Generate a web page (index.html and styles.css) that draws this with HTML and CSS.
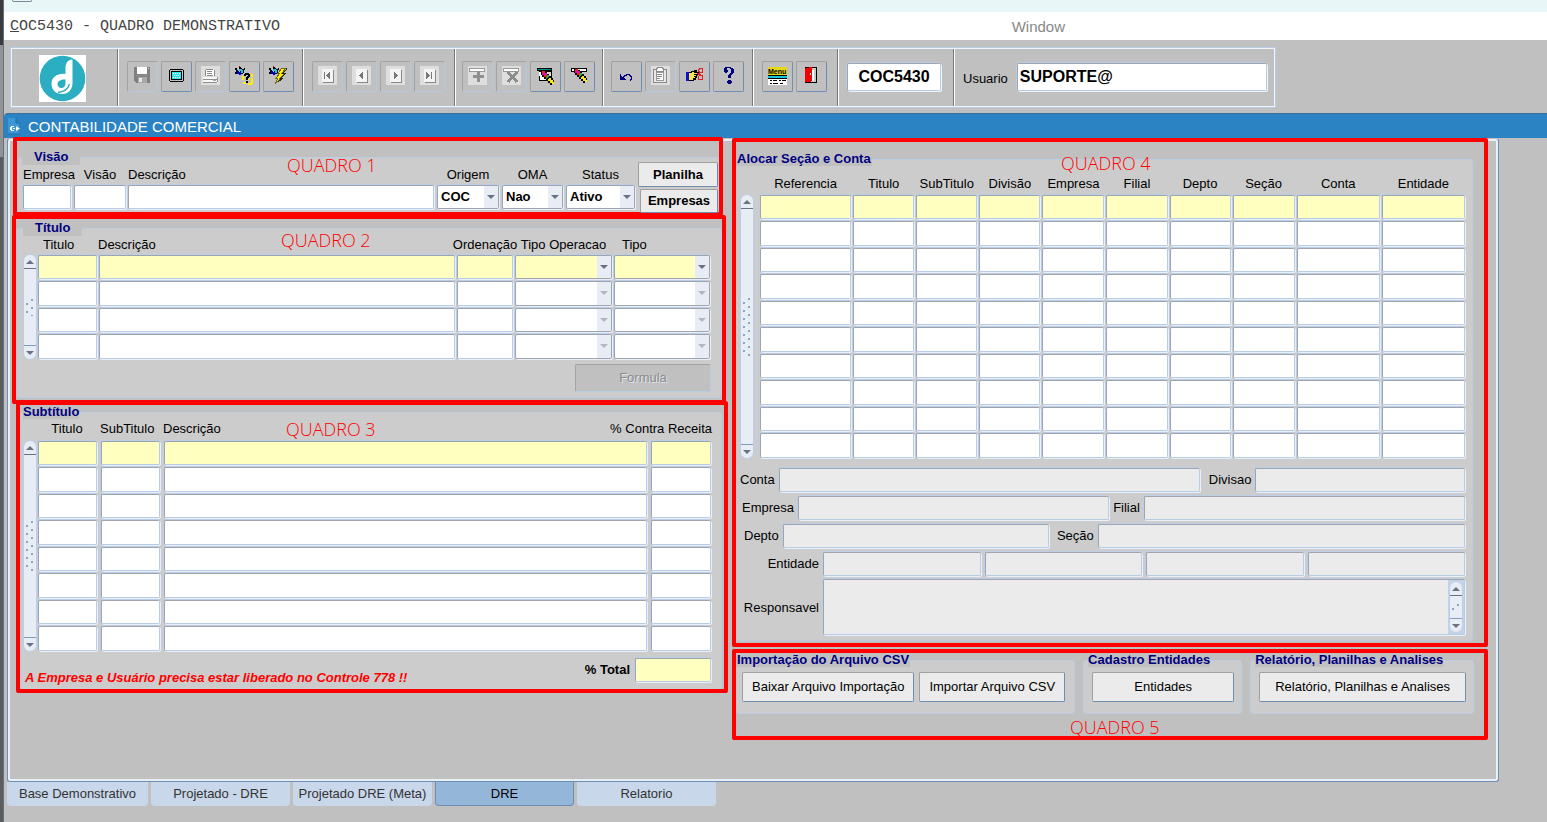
FILE: index.html
```html
<!DOCTYPE html>
<html lang="pt-BR">
<head>
<meta charset="utf-8">
<title>COC5430 - Quadro Demonstrativo</title>
<link rel="stylesheet" href="styles.css">
</head>
<body>
<div class="shell">
  <div class="edge"></div>
  <div class="app">
    <div class="browser-strip"><div class="browser-box"></div></div>
    <nav class="menubar">
      <span class="menu-title"><u>C</u>OC5430 - QUADRO DEMONSTRATIVO</span>
      <span class="menu-window">Window</span>
    </nav>

    <div class="toolbar-area">
      <div class="toolbar">
        <div class="tool-logo">
          <svg width="47" height="47" viewBox="0 0 47 47" aria-label="Logo">
            <rect width="47" height="47" fill="#fff"/>
            <circle cx="23.500" cy="23.500" r="22.800" fill="#2badc2"/>
            <path d="M33 4.500C29 5 26.500 8 26.500 13V19C19 18 12.500 22 12.500 28.500C12.500 35 17 39 23 39C29.500 39 33.500 34.500 33.500 28V5Z" fill="#fff"/>
            <path d="M26.500 24.500V28C26.500 31 24.800 33 22.300 33C20 33 18.500 31.300 18.500 29C18.500 26 22 24.300 26.500 24.500Z" fill="#2badc2"/>
            <path d="M19 37.500C25 37 29 34 30.500 29" stroke="#2badc2" stroke-width="1.300" fill="none"/>
          </svg>
        </div>
        <div class="tool-group">
          <button class="tool" disabled aria-label="Salvar"><svg viewBox="0 0 19 19"><path d="M1 1H17V17H3L1 15Z" fill="#808080"/><path d="M4 1H14V8H4Z" fill="#fff"/><path d="M5 11H14V17H5Z" fill="#a8a8a8"/><path d="M6 12H9V16H6Z" fill="#e8e8e8"/><path d="M15 2H16V3H15Z" fill="#ddd"/><path d="M3 9H15V10H3Z" fill="#909090"/></svg></button>
          <button class="tool" aria-label="Tela"><svg viewBox="0 0 19 19"><path d="M3 3H16V4H17V15H16V16H3V15H2V4H3Z" fill="#000"/><path d="M3 4H16V15H3Z" fill="#c0c0c0"/><path d="M4 5H15V14H4Z" fill="#000"/><path d="M5 6H14V13H5Z" fill="#35e6ee"/><path d="M6 7h1v1h-1zM8 7h1v1h-1zM10 7h1v1h-1zM12 7h1v1h-1zM7 9h1v1h-1zM9 9h1v1h-1zM11 9h1v1h-1zM6 11h1v1h-1zM8 11h1v1h-1zM10 11h1v1h-1zM12 11h1v1h-1z" fill="#d8ffff"/></svg></button>
          <button class="tool" disabled aria-label="Imprimir"><svg viewBox="0 0 19 19"><path d="M0 0H19V19H0Z" fill="#dedede"/><path d="M5 3H13V10H4V5Z" fill="#fff"/><path d="M5 3H12V4H5ZM4 4H5V10H4ZM13 4H14V10H13ZM6 5H11V6H6ZM6 7H11V8H6ZM6 9H12V10H6Z" fill="#888"/><path d="M2 11H16V12H17V17H2Z" fill="#f8f8f8"/><path d="M2 13H16V14H2ZM2 16H16V17H2ZM16 11H17V16H16Z" fill="#909090"/><path d="M12 14H15V15H12Z" fill="#aaa"/></svg></button>
          <button class="tool" aria-label="Entrar consulta"><svg viewBox="0 0 19 19"><path d="M9 8h2v1h-2zM14 7h2v1h-2zM16 8h2v3h-2zM7 10h2v4h-2zM16 12h2v6h-2zM8 16h3v2h-3zM12 13h3v1h-3zM13 17h4v2h-4z" fill="#ffee00"/><use href="#torch"/><path d="M10 7H14V8H15V11H14V12H13V14H11V11H12V10H13V9H11V10H9V8H10ZM11 15H13V17H11Z" fill="#000"/></svg></button>
          <button class="tool" aria-label="Executar consulta"><svg viewBox="0 0 19 19"><use href="#torch"/><path d="M13 2L17 2L13 7H16L11 12H13L6 18L9 12H7L11 7H9Z" fill="#ffee00" stroke="#736c12" stroke-width="1"/><path d="M17 2V4L14 7H17L12 12H14L9 16" fill="none" stroke="#222" stroke-width="1"/></svg></button>
        </div>
        <div class="tool-group group-nav">
          <button class="tool" disabled aria-label="Primeiro"><svg viewBox="0 0 19 19"><use href="#page"/><path d="M6 6H7V13H6ZM8 9H9V8H10V7H11V6H12V13H11V12H10V11H9V10H8Z" fill="#777"/></svg></button>
          <button class="tool" disabled aria-label="Anterior"><svg viewBox="0 0 19 19"><use href="#page"/><path d="M7 9H8V8H9V7H10V6H11V13H10V12H9V11H8V10H7Z" fill="#777"/></svg></button>
          <button class="tool" disabled aria-label="Próximo"><svg viewBox="0 0 19 19"><use href="#page"/><path d="M8 6H9V7H10V8H11V9H12V10H11V11H10V12H9V13H8Z" fill="#777"/></svg></button>
          <button class="tool" disabled aria-label="Último"><svg viewBox="0 0 19 19"><use href="#page"/><path d="M6 6H7V7H8V8H9V9H10V10H9V11H8V12H7V13H6ZM11 6H12V13H11Z" fill="#777"/></svg></button>
        </div>
        <div class="tool-group group-record">
          <button class="tool" disabled aria-label="Inserir registro"><svg viewBox="0 0 19 19"><path d="M0 0H19V19H0Z" fill="#dedede"/><path d="M1 2H17V6H1Z" fill="#999"/><path d="M2 3H16V5H2Z" fill="#fff"/><path d="M9 5H12V9H16V12H12V16H9V12H5V9H9Z" fill="#909090"/></svg></button>
          <button class="tool" disabled aria-label="Remover registro"><svg viewBox="0 0 19 19"><path d="M0 0H19V19H0Z" fill="#dedede"/><path d="M1 2H17V6H1Z" fill="#999"/><path d="M2 3H16V5H2Z" fill="#fff"/><path d="M6 6L15 16M15 6L6 16" stroke="#8c8c8c" stroke-width="3"/></svg></button>
          <button class="tool" aria-label="Limpar bloco"><svg viewBox="0 0 19 19"><path d="M1 2H16V15H3V5H1Z" fill="#000"/><path d="M2 3H15V4H2Z" fill="#0b8a8a"/><path d="M4 6H15V14H4Z" fill="#d8d8d8"/><path d="M3 6L7 6L9 14H4Z" fill="#fff"/><use href="#pencil" x="0" y="1"/></svg></button>
          <button class="tool" aria-label="Limpar registro"><svg viewBox="0 0 19 19"><path d="M1 2H17V6H1Z" fill="#000"/><path d="M2 3H16V5H2Z" fill="#fff"/><use href="#pencil" x="-1" y="-1"/></svg></button>
        </div>
        <div class="tool-group group-edit">
          <button class="tool" aria-label="Desfazer"><svg viewBox="0 0 19 19"><path d="M3 8V14H9V13H8V12H7V11H8V10H10V9H12V10H13V11H14V13H13V15H14V14H15V10H14V9H13V8H9V9H7V10H6V11H5V10H4V8Z" fill="#000080"/></svg></button>
          <button class="tool" disabled aria-label="Colar"><svg viewBox="0 0 19 19"><path d="M0 0H19V19H0Z" fill="#dedede"/><path d="M2 3H15V16H2Z" fill="#e8e8e8" stroke="#8a8a8a"/><path d="M5 2H6V1H11V2H12V5H5Z" fill="#fff" stroke="#8a8a8a"/><path d="M5 6H12V14H5Z" fill="#fff" stroke="#999"/><path d="M6 8H11V9H6ZM6 10H11V11H6ZM6 12H9V13H6Z" fill="#8a8a8a"/></svg></button>
          <button class="tool" aria-label="Recortar"><svg viewBox="0 0 19 19"><path d="M1 6H4V15H1Z" fill="#1010d8"/><path d="M4 6H6V5H9V4H12V6H15V9H12V12H11V14H9V15H4Z" fill="#000"/><path d="M4 7H7V6H9V7H14V8H9V9H11V10H9V11H10V12H8V14H4Z" fill="#f8e64c"/><path d="M13 3H14V2H17V6H14V5H13ZM12 7L16 9M16 6L12 10M14 9H17V13H13V10" fill="none" stroke="#e02020"/></svg></button>
          <button class="tool" aria-label="Ajuda"><svg viewBox="0 0 19 19"><path d="M6 1H12V2H14V3H15V7H14V8H13V9H12V12H9V9H10V8H11V7H12V3H11V2H8V4H9V6H8V7H6V6H5V2H6ZM9 14H12V15H13V17H12V18H9V17H8V15H9Z" fill="#000080"/></svg></button>
        </div>
        <div class="tool-group group-exit">
          <button class="tool" aria-label="Menu"><svg viewBox="0 0 19 19"><rect y="1" width="19" height="8" fill="#e6d810"/><text x="0" y="8" class="menu-glyph">Menu</text><path d="M0 9H19V19H0Z" fill="#fff"/><path d="M0 9H19V10H0ZM0 12H19V13H0Z" fill="#000"/><path d="M0 10H19V12H0Z" fill="#18c8d8"/><path d="M2 14H4V15H2ZM5 14H9V15H5ZM11 14H13V15H11ZM14 14H18V15H14ZM2 17H4V18H2ZM5 17H10V18H5ZM12 17H15V18H12Z" fill="#000"/></svg></button>
          <button class="tool" aria-label="Sair"><svg viewBox="0 0 19 19"><path d="M3 1H15V17H3Z" fill="#000"/><path d="M9 2H14V16H9Z" fill="#c8c8c8"/><path d="M10 4H12V15H10Z" fill="#fff"/><path d="M3 2L10 1V14L8 16H3Z" fill="#f00000"/><path d="M8 7H9V9H8Z" fill="#fff"/></svg></button>
        </div>
        <div class="tool-group group-code"><input class="big-input code" value="COC5430" aria-label="Programa"></div>
        <div class="tool-group group-user"><label for="usuario">Usuario</label><input class="big-input" id="usuario" value="SUPORTE@"></div>
      </div>
    </div>

    <header class="titlebar">
      <svg width="13" height="17" viewBox="0 0 13 17" aria-hidden="true"><path d="M0 0H8V5H13V16H0Z" fill="#3d97d4"/><path d="M8 0V5H13" fill="none" stroke="#176da8"/><path d="M12 6V16H0" fill="none" stroke="#1f70aa"/><path d="M2 9H3V8H6V9H4V12H6V13H3V12H2ZM5 10H7V11H5ZM8 8L12 10.500L8 13Z" fill="#fff"/></svg>
      <h1>CONTABILIDADE COMERCIAL</h1>
    </header>

    <main class="workspace">
      <div class="panel">
        <div class="column">
          <section class="frame frame-1">
            <span class="note">QUADRO 1</span>
            <fieldset class="group">
              <legend class="wide">Visão</legend>
              <div class="filters">
                <div class="field"><label for="empresa">Empresa</label><input class="cell" id="empresa"></div>
                <div class="field"><label for="visao">Visão</label><input class="cell" id="visao"></div>
                <div class="field start"><label for="descricao">Descrição</label><input class="cell" id="descricao"></div>
                <div class="field"><label for="origem">Origem</label><span class="pick"><select id="origem"><option>COC</option></select></span></div>
                <div class="field"><label for="oma">OMA</label><span class="pick"><select id="oma"><option>Nao</option></select></span></div>
                <div class="field"><label for="status">Status</label><span class="pick"><select id="status"><option>Ativo</option></select></span></div>
                <div class="side-buttons"><button class="btn">Planilha</button><button class="btn narrow">Empresas</button></div>
              </div>
            </fieldset>
          </section>

          <section class="frame frame-2">
            <span class="note">QUADRO 2</span>
            <fieldset class="group">
              <legend class="wide">Título</legend>
              <div class="grid-block">
                <div class="scroll"><button aria-label="Subir"></button><i></i><button aria-label="Descer"></button></div>
                <table class="entry" data-rows="4" data-selects="3,4">
                  <colgroup><col class="w61"><col><col class="w58"><col class="w99"><col class="w98"></colgroup>
                  <thead><tr><th class="start indent">Titulo</th><th class="start">Descrição</th><th class="center-wide"><span>Ordenação</span></th><th>Tipo Operacao</th><th class="start indent-more">Tipo</th></tr></thead>
                  <tbody></tbody>
                </table>
              </div>
              <button class="btn formula" disabled>Formula</button>
            </fieldset>
          </section>

          <section class="frame frame-3">
            <span class="note">QUADRO 3</span>
            <fieldset class="group">
              <legend>Subtítulo</legend>
              <div class="grid-block">
                <div class="scroll"><button aria-label="Subir"></button><i></i><button aria-label="Descer"></button></div>
                <table class="entry spaced" data-rows="8">
                  <colgroup><col class="w63"><col class="w63"><col><col class="w64"></colgroup>
                  <thead><tr><th class="narrowed">Titulo</th><th class="start">SubTitulo</th><th class="start">Descrição</th><th class="end"><span>% Contra Receita</span></th></tr></thead>
                  <tbody></tbody>
                </table>
              </div>
              <div class="total-row">
                <em>A Empresa e Usuário precisa estar liberado no Controle 778 !!</em>
                <label for="total">% Total</label>
                <input class="cell current" id="total">
              </div>
            </fieldset>
          </section>
        </div>

        <div class="column">
          <section class="frame frame-4">
            <span class="note">QUADRO 4</span>
            <fieldset class="group">
              <legend>Alocar Seção e Conta</legend>
              <div class="grid-block">
                <div class="scroll"><button aria-label="Subir"></button><i></i><button aria-label="Descer"></button></div>
                <table class="entry" data-rows="10">
                  <colgroup><col class="w93"><col class="w63"><col class="w63"><col class="w63"><col class="w64"><col class="w63"><col class="w63"><col class="w64"><col class="w85"><col class="w85"></colgroup>
                  <thead><tr><th>Referencia</th><th>Titulo</th><th>SubTitulo</th><th>Divisão</th><th>Empresa</th><th>Filial</th><th>Depto</th><th>Seção</th><th>Conta</th><th>Entidade</th></tr></thead>
                  <tbody></tbody>
                </table>
              </div>
              <div class="details">
                <div class="detail row-conta"><label for="d-conta">Conta</label><input class="cell read" id="d-conta" readonly><label for="d-divisao">Divisao</label><input class="cell read" id="d-divisao" readonly></div>
                <div class="detail row-empresa"><label for="d-empresa">Empresa</label><input class="cell read" id="d-empresa" readonly><label for="d-filial">Filial</label><input class="cell read" id="d-filial" readonly></div>
                <div class="detail row-depto"><label for="d-depto">Depto</label><input class="cell read" id="d-depto" readonly><label for="d-secao">Seção</label><input class="cell read" id="d-secao" readonly></div>
                <div class="detail row-entidade"><label for="d-ent">Entidade</label><input class="cell read" id="d-ent" readonly><input class="cell read" aria-label="Entidade 2" readonly><input class="cell read" aria-label="Entidade 3" readonly><input class="cell read" aria-label="Entidade 4" readonly></div>
                <div class="detail row-resp"><label for="d-resp">Responsavel</label>
                  <div class="memo"><textarea id="d-resp" readonly></textarea><div class="scroll"><button aria-label="Subir"></button><i></i><button aria-label="Descer"></button></div></div>
                </div>
              </div>
            </fieldset>
          </section>

          <section class="frame frame-5">
            <span class="note">QUADRO 5</span>
            <fieldset class="group csv"><legend>Importação do Arquivo CSV</legend><div class="actions"><button class="btn">Baixar Arquivo Importação</button><button class="btn">Importar Arquivo CSV</button></div></fieldset>
            <fieldset class="group entities"><legend>Cadastro Entidades</legend><div class="actions"><button class="btn">Entidades</button></div></fieldset>
            <fieldset class="group reports"><legend>Relatório, Planilhas e Analises</legend><div class="actions"><button class="btn">Relatório, Planilhas e Analises</button></div></fieldset>
          </section>
        </div>
      </div>

      <div class="tabs" role="tablist">
        <button role="tab">Base Demonstrativo</button>
        <button role="tab">Projetado - DRE</button>
        <button role="tab">Projetado DRE (Meta)</button>
        <button role="tab" class="active" aria-selected="true">DRE</button>
        <button role="tab">Relatorio</button>
      </div>
    </main>
  </div>
</div>

<svg class="defs" aria-hidden="true">
  <defs>
    <g id="page"><path d="M0 0H19V19H0Z" fill="#dedede"/><path d="M4 3H15V16H4Z" fill="#f4f4f4"/><path d="M15 4H16V17H5V16H15Z" fill="#888"/></g>
    <g id="torch"><path d="M0 2H2V4H3V6H2V8H0V6H1V4H0ZM4 1H6V2H7V3H9V2H10V4H9V7H8V8H6V9H5V5H4Z" fill="#000"/><path d="M2 5H4V6H6V9H4V8H2Z" fill="#0000c0"/><path d="M4 3H7V4H8V7H6V5H4Z" fill="#12c8f0"/><path d="M4 0H5V1H4Z" fill="#e00000"/></g>
    <g id="pencil"><path d="M5 4H9V5H11V7H13V9H15V11H17V13H18V17H16V18H14V16H12V14H10V12H8V10H6V8H5Z" fill="#000"/><path d="M6 4H9V6H6Z" fill="#f02020"/><path d="M8 6H11V8H8ZM6 6H8V8H6Z" fill="#e010b0"/><path d="M8 8H11V10H8Z" fill="#f02020"/><path d="M11 8H13V10H12V11H11V12H10V10H11Z" fill="#10c040"/><path d="M13 11H15V13H17V15H18V17H16V16H14V14H12V12H13Z" fill="#ffe81a"/></g>
  </defs>
</svg>
<script src="app.js"></script>
</body>
</html>
```

FILE: styles.css
```css
* { box-sizing: border-box; }

body {
  margin: 0;
  background: #c0c0c0;
  color: #000;
  font: 13px/16px "Liberation Sans", Arial, sans-serif;
}

input, select, textarea, button { font: inherit; color: inherit; margin: 0; }

.defs { position: absolute; width: 0; height: 0; }

.shell { display: flex; min-height: 100vh; }
.edge {
  flex: none;
  width: 4px;
  border-right: 1px solid #5f7187;
  background: linear-gradient(#3c3a3b 45px, #929292 45px, #929292 157px, #5c5c5c 157px);
}
.app { flex: 1; min-width: 0; }

/* Browser strip and menu */
.browser-strip { height: 12px; padding-left: 8px; background: #e8f6f8; }
.browser-box { width: 20px; height: 2px; border: 1px solid #7b8794; border-top: 0; border-radius: 0 0 3px 3px; }
.menubar {
  display: flex;
  align-items: center;
  justify-content: space-between;
  height: 28px;
  padding: 2px 482px 0 6px;
  background: #fff;
}
.menu-title { color: #444; font: 15px/20px "Liberation Mono", monospace; }
.menu-window { color: #888; font-size: 15px; line-height: 20px; }

/* Toolbar */
.toolbar-area { padding: 7px 6px 5px; }
.toolbar {
  display: flex;
  width: max-content;
  height: 61px;
  border: 1px solid #b8cce6;
  box-shadow: inset 1px 1px #eef4fb, inset -1px -1px #eef4fb;
}
.tool-logo { display: flex; align-items: center; width: 106px; padding: 2px 0 0 28px; }
.tool-group {
  display: flex;
  align-items: center;
  gap: 3px;
  margin: 1px 0;
  padding: 0 8px 2px 9px;
  border-left: 1px solid #777;
  box-shadow: inset 1px 0 #fff;
}
.group-nav { padding-right: 9px; }
.group-record { padding-left: 7px; padding-right: 7px; }
.group-edit { padding-left: 8px; }
.group-exit { padding-right: 10px; }
.group-code { padding-right: 12px; }
.group-user { gap: 9px; padding-right: 8px; }
.group-user label { padding-top: 5px; }

.tool {
  display: flex;
  align-items: center;
  justify-content: center;
  width: 31px;
  height: 31px;
  padding: 0 1px 2px 0;
  border: 1px solid;
  border-color: #a0a0a0 #6d8db3 #6d8db3 #a0a0a0;
  border-radius: 2px;
  background: #c0c0c0;
}
.tool:disabled { border-color: #a3a3a3 #b4c8e2 #b4c8e2 #a3a3a3; }
.tool svg { flex: none; width: 19px; height: 19px; shape-rendering: crispEdges; }
.menu-glyph { font: bold 7px "Liberation Sans", Arial, sans-serif; }

.big-input {
  width: 250px;
  height: 28px;
  padding: 0 2px;
  border: 1px solid;
  border-color: #a0a5ad #b8cce6 #b8cce6 #a0a5ad;
  border-radius: 2px;
  box-shadow: -1px -1px #b8cce6, 1px 1px #eef4fb;
  background: #fff;
  font-size: 16px;
  font-weight: bold;
}
.big-input.code { width: 94px; text-align: center; }

/* Title bar */
.titlebar {
  display: flex;
  align-items: center;
  gap: 7px;
  height: 25px;
  padding: 1px 0 0 4px;
  border-top: 1px solid #3f6f98;
  border-top-left-radius: 4px;
  background: #2b83c4;
  color: #fff;
}
.titlebar h1 { margin: 0; font-size: 15px; font-weight: normal; line-height: 20px; }

/* Main panel */
.workspace { padding: 0 48px 16px 3px; }
.panel {
  display: grid;
  grid-template-columns: 716fr 756fr;
  align-items: start;
  gap: 4px;
  padding: 0 10px 41px 4px;
  border: 1px solid #6c8fb5;
  border-top-color: #c0c0c0;
  border-radius: 3px;
  box-shadow: inset 0 0 0 2px #e9eff7;
}
.column { min-width: 0; }

.frame { position: relative; border: 4px solid #f00; border-radius: 2px; background: #c0c0c0; }
.frame-1 { margin: -2px 5px 0 1px; }
.frame-2 { margin: -1px 2px 0 0; }
.frame-3 { margin: -3px 0 0 4px; }
.frame-4 { margin-top: -1px; }
.frame-5 { display: flex; gap: 8px; margin-top: 2px; padding: 0 10px 22px 0; }

.note {
  position: absolute;
  z-index: 1;
  color: #f00;
  font: 300 18px/24px "Open Sans", "Noto Sans", sans-serif;
  white-space: nowrap;
}
.frame-1 .note { left: 270px; top: 12px; }
.frame-2 .note { left: 265px; top: 9px; }
.frame-3 .note { left: 266px; top: 12px; }
.frame-4 .note { left: 325px; top: 9px; }
.frame-5 .note { left: 334px; top: 62px; }

.group {
  min-width: 0;
  margin: 0;
  padding: 0;
  border: 1px solid #bccde2;
  border-radius: 4px;
  background: #ccc;
}
.group legend { padding: 0; background: #c0c0c0; color: #000080; font-weight: bold; line-height: 14px; }
.group legend.wide { padding: 0 12px; line-height: 16px; }
.frame-1 .group { margin-top: 8px; padding: 0 1px 2px 4px; border-width: 1px 0 0 1px; }
.frame-2 .group { margin: 1px 0 2px; padding: 0 10px 5px 6px; }
.frame-3 .group { margin-right: 2px; padding: 0 7px 3px 2px; border-bottom: 0; }
.frame-4 .group { margin: 10px 11px 2px 0; padding: 0 6px 4px 0; border-left: 0; }
.frame-4 legend, .csv legend { padding: 0 1px; }

/* Inputs */
.cell {
  display: block;
  width: 100%;
  min-width: 0;
  height: 24px;
  padding: 0 2px;
  border: 1px solid;
  border-color: #a0a5ad #b8cce6 #b8cce6 #a0a5ad;
  border-radius: 2px;
  box-shadow: -1px -1px #bccee5, 1px 1px #e9f0f9;
  background: #fff;
}

.pick { position: relative; display: block; }
.pick select {
  display: block;
  width: 100%;
  height: 24px;
  padding: 0 16px 0 3px;
  border: 1px solid #a0a5ad;
  border-radius: 2px;
  box-shadow: -1px -1px #bccee5, 1px 1px #e9f0f9;
  background: #fff;
  appearance: none;
  font-weight: bold;
  opacity: 1;
}
.pick::before, .pick::after { content: ""; position: absolute; pointer-events: none; }
.pick::before { top: 1px; right: 1px; bottom: 1px; width: 14px; background: #e8edf5; }
.pick::after { top: 10px; right: 4px; border: 4px solid transparent; border-top-color: #6b7184; border-bottom: 0; }
.pick.off::after { border-top-color: #b3b7bd; }

.cell.current, .current .cell, .current .pick select { background: #ffffc0; }
.cell.read { background: #ebebeb; }

.btn {
  padding: 0;
  border: 1px solid;
  border-color: #a0a0a0 #6d8db3 #6d8db3 #a0a0a0;
  border-radius: 2px;
  background: #ebebeb;
  white-space: nowrap;
}

/* Filters row */
.filters {
  display: grid;
  grid-template-columns: 50px 54px 1fr 64px 63px 71px 81px;
  gap: 1px;
}
.field { display: flex; flex-direction: column; gap: 2px; min-width: 0; padding: 2px 1px 1px; text-align: center; white-space: nowrap; }
.field.start { padding-left: 0; text-align: left; }
.side-buttons { display: flex; flex-direction: column; align-items: flex-end; gap: 2px; margin: -3px 0 -3px; }
.side-buttons .btn { width: 80px; height: 25px; font-weight: bold; }
.side-buttons .narrow { width: 78px; height: 24px; }

/* Multi-record tables */
.grid-block { display: flex; }
.frame-4 .grid-block { gap: 5px; padding-left: 4px; }
.entry { flex: 1; width: 100%; min-width: 0; table-layout: fixed; border-collapse: collapse; }
.entry th { height: 18px; padding: 0; font-weight: normal; white-space: nowrap; }
.entry td { padding: 1px; }
.entry tr:nth-child(even) .cell, .entry tr:nth-child(even) select { height: 25px; }
.entry.spaced td { padding-right: 3px; }
.frame-3 .entry th { height: 21px; padding-bottom: 2px; }
.frame-4 .entry th { height: 28px; padding-bottom: 2px; vertical-align: bottom; }
.entry th.start { text-align: left; }
.entry th.indent { padding-left: 6px; }
.entry th.indent-more { padding-left: 9px; }
.entry th.narrowed { padding-right: 3px; }
.entry th.end span { display: flex; justify-content: flex-end; padding-right: 2px; }
.center-wide span { display: flex; justify-content: center; }
.w58 { width: 58px; }
.w61 { width: 61px; }
.w63 { width: 63px; }
.w64 { width: 64px; }
.w85 { width: 85px; }
.w93 { width: 93px; }
.w98 { width: 98px; }
.w99 { width: 99px; }

/* Scroll bars with rounded ends and a dotted grip */
.scroll {
  flex: none;
  display: flex;
  flex-direction: column;
  align-items: center;
  justify-content: space-between;
  width: 14px;
  margin-top: 18px;
  border: 1px solid #bccee5;
  border-radius: 7px;
  background: #e8edf5;
}
.frame-3 .scroll { margin-top: 21px; }
.frame-4 .scroll { margin-top: 28px; }
.scroll button { width: 12px; height: 14px; padding: 0; border: 0; border-bottom: 1px solid #6b7184; background: none; }
.scroll button:last-child { border-bottom: 0; border-top: 1px solid #7f9dbd; }
.scroll button::after { content: ""; display: block; width: 0; margin: 0 auto; border: 4px solid transparent; border-bottom-color: #6b7184; border-top: 0; }
.scroll button:last-child::after { border-bottom: 0; border-top: 4px solid #6b7184; }
.scroll i {
  width: 8px;
  height: 18px;
  background:
    radial-gradient(circle at 6px 2px, #8aa5c2 1px, transparent 1px) 0 0 / 8px 8px,
    radial-gradient(circle at 1px 6px, #8aa5c2 1px, transparent 1px) 0 0 / 8px 8px;
}
.frame-3 .scroll i { height: 52px; }
.frame-4 .scroll i { height: 60px; }

.formula {
  display: block;
  width: 136px;
  height: 28px;
  margin: 4px 0 0 auto;
  border-color: #a3a3a3 #b8cce6 #b8cce6 #a3a3a3;
  background: #c0c0c0;
  color: #8c8c8c;
  text-shadow: 1px 1px #dfe6ee;
}

.total-row { display: flex; align-items: flex-start; gap: 5px; padding: 6px 3px 0 2px; }
.total-row em { flex: 1; padding-top: 12px; color: #f00; font-weight: bold; }
.total-row label { padding-top: 4px; font-weight: bold; }
.total-row .cell { width: 76px; }

/* Details */
.details { display: grid; gap: 4px; padding: 9px 1px 1px 4px; }
.detail { display: grid; align-items: center; white-space: nowrap; column-gap: 4px; }
.row-conta { grid-template-columns: auto 422fr auto 210fr; }
.row-conta label + input + label { padding-left: 5px; }
.row-empresa { grid-template-columns: auto 310fr auto 320fr; padding-left: 2px; }
.row-depto { grid-template-columns: auto 266fr auto 367fr; padding-left: 4px; }
.row-depto label + input + label { padding-left: 4px; }
.row-entidade, .row-resp { text-align: right; }
.row-entidade { grid-template-columns: 79px repeat(4, 1fr); }
.row-resp { grid-template-columns: 79px 1fr; }
.memo {
  display: flex;
  height: 56px;
  margin-top: -1px;
  border: 1px solid;
  border-color: #a0a5ad #b8cce6 #b8cce6 #a0a5ad;
  border-radius: 2px;
  box-shadow: -1px -1px #bccee5, 1px 1px #e9f0f9;
  background: #c3d3e8;
}
.memo textarea { flex: 1; min-width: 0; padding: 2px; border: 0; background: #ebebeb; resize: none; outline: 0; }
.frame-4 .memo .scroll { margin: 1px; }
.frame-4 .memo .scroll i { height: 8px; }

/* Action groups */
.frame-5 .group { padding-bottom: 11px; }
.csv { flex: 340 1 0; border-left: 0; }
.entities { flex: 158 1 0; }
.reports { flex: 223 1 0; }
.entities legend, .reports legend { margin-left: 4px; }
.actions { display: flex; gap: 5px; padding: 5px 7px 0 8px; }
.csv .actions { padding: 5px 9px 0 6px; }
.actions .btn { flex: 1 1 auto; height: 30px; }

/* Tabs */
.tabs { display: flex; gap: 3px; }
.tabs button {
  width: 139px;
  height: 24px;
  padding: 0;
  border: 1px solid #c9d7ea;
  border-top: 0;
  border-radius: 0 0 4px 4px;
  background: #c9d7ea;
  color: #333;
  white-space: nowrap;
}
.tabs button:first-child { width: 141px; }
.tabs button.active { border-color: #6d8db3; background: #94b6d8; color: #000; }
```

FILE: app.js
```js
// Fills each multi-record table with its empty rows; the first one is the current record.
document.querySelectorAll("table.entry").forEach((table) => {
  const names = [...table.querySelectorAll("th")].map((th) => th.textContent);
  const selects = (table.dataset.selects || "").split(",");
  const body = table.tBodies[0];

  for (let row = 0; row < Number(table.dataset.rows); row++) {
    const tr = body.insertRow();
    if (row === 0) tr.className = "current";

    names.forEach((name, col) => {
      const td = tr.insertCell();
      const isSelect = selects.includes(String(col));
      const control = document.createElement(isSelect ? "select" : "input");
      control.setAttribute("aria-label", name + " " + (row + 1));
      if (isSelect) {
        const pick = document.createElement("span");
        pick.className = row === 0 ? "pick" : "pick off";
        control.disabled = row > 0;
        pick.append(control);
        td.append(pick);
      } else {
        control.className = "cell";
        td.append(control);
      }
    });
  }
});
```
